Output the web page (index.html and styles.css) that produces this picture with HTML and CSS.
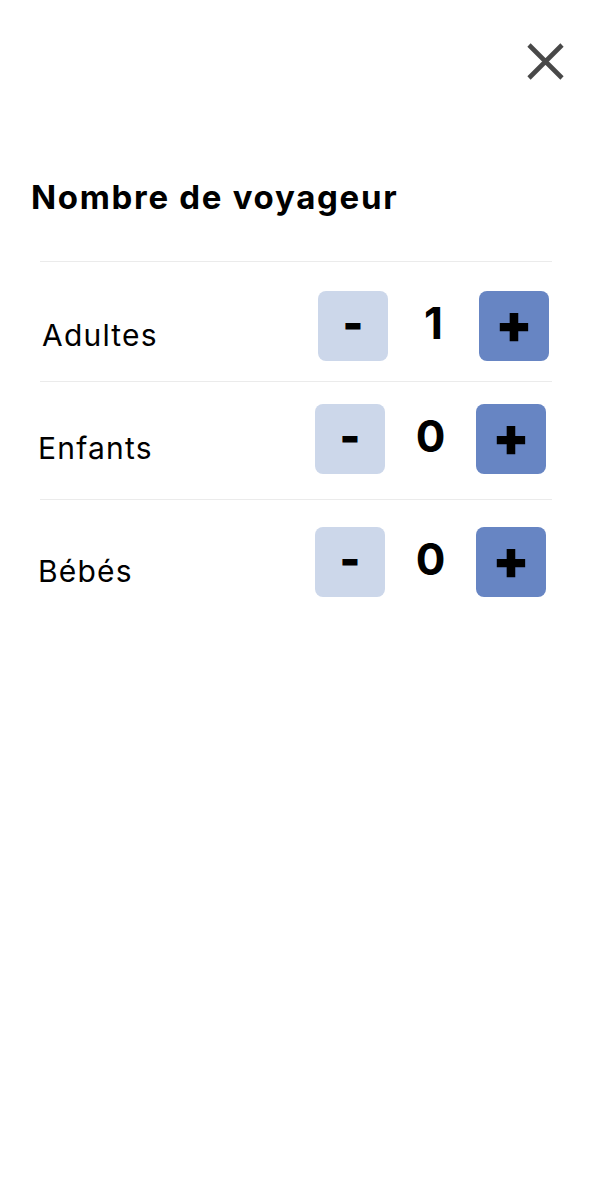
FILE: index.html
```html
<!DOCTYPE html>
<html lang="fr">
<head>
<meta charset="utf-8">
<title>Nombre de voyageur</title>
<link rel="stylesheet" href="styles.css">
</head>
<body>
<main class="sheet">
  <header class="top">
    <button class="close" aria-label="Fermer">
      <svg class="close-icon" width="37" height="37" viewBox="0 0 37 37" aria-hidden="true">
        <path d="M2 2 L35 35 M35 2 L2 35" stroke="#484848" stroke-width="4.6" fill="none"/>
      </svg>
    </button>
  </header>
  <h1 class="title">Nombre de voyageur</h1>
  <ul class="list">
    <li class="row row--first">
      <div class="row-inner row-inner--first">
        <span class="label">Adultes</span>
        <div class="counter">
          <button class="btn btn--minus">-</button>
          <span class="count">1</span>
          <button class="btn btn--plus">+</button>
        </div>
      </div>
    </li>
    <li class="row row--second">
      <div class="row-inner">
        <span class="label">Enfants</span>
        <div class="counter">
          <button class="btn btn--minus">-</button>
          <span class="count">0</span>
          <button class="btn btn--plus">+</button>
        </div>
      </div>
    </li>
    <li class="row row--third">
      <div class="row-inner">
        <span class="label">Bébés</span>
        <div class="counter">
          <button class="btn btn--minus">-</button>
          <span class="count">0</span>
          <button class="btn btn--plus">+</button>
        </div>
      </div>
    </li>
  </ul>
</main>
</body>
</html>
```

FILE: styles.css
```css
* { box-sizing: border-box; }

html, body {
  margin: 0;
  padding: 0;
  background: #ffffff;
}

body {
  font-family: "Inter", "DejaVu Sans", sans-serif;
  color: #000000;
}

.sheet {
  width: 591px;
  min-height: 1199px;
}

.top {
  display: flex;
  justify-content: flex-end;
  padding: 43px 27px 0 0;
}

.close {
  display: block;
  width: 37px;
  height: 37px;
  padding: 0;
  margin: 0;
  border: none;
  background: none;
}

.close-icon { display: block; }

.title {
  margin: 97px 0 0 31px;
  font-size: 33px;
  line-height: 40px;
  font-weight: 700;
  letter-spacing: 1.7px;
}

.list {
  list-style: none;
  margin: 44px 39px 0 40px;
  padding: 0;
}

.row {
  border-top: 1px solid #ebebeb;
}

.row--first { padding: 29px 0 20px; }
.row--second { padding: 22px 0 25px; }
.row--third { padding: 27px 0 0; }

.row-inner {
  display: flex;
  justify-content: space-between;
  align-items: flex-end;
  margin: 0 6px 0 -2px;
}

.row-inner--first {
  margin: 0 3px 0 2px;
}

.label {
  font-size: 30px;
  line-height: 30px;
  font-weight: 400;
  letter-spacing: 1.2px;
  margin-bottom: 11px;
}

.counter {
  display: flex;
  align-items: flex-start;
}

.btn {
  width: 70px;
  height: 70px;
  border: none;
  border-radius: 8px;
  padding: 0;
  margin: 0;
  display: flex;
  align-items: center;
  justify-content: center;
  font-family: "Inter", "DejaVu Sans", sans-serif;
  font-size: 44px;
  font-weight: 900;
  color: #000000;
  line-height: 1;
}

.btn--minus {
  background: #ccd7ea;
  padding-bottom: 6px;
}

.btn--plus {
  background: #6785c3;
  font-size: 54px;
  padding-bottom: 4px;
}

.count {
  width: 91px;
  height: 64px;
  text-align: center;
  font-size: 44px;
  line-height: 64px;
  font-weight: 700;
}
```
